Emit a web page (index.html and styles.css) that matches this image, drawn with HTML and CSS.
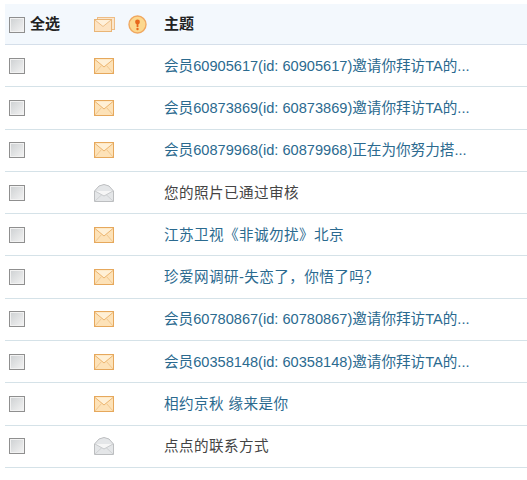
FILE: index.html
```html
<!DOCTYPE html>
<html lang="zh-CN">
<head>
  <meta charset="UTF-8" />
  <title>收件箱</title>
  <link rel="stylesheet" href="styles.css">
</head>
<body>

<svg class="defs" width="0" height="0">
  <symbol id="mailNew" viewBox="0 0 20 16">
    <rect x="0.5" y="0.5" width="19" height="15" fill="#fde2b8" stroke="#e6a85c"/>
    <path d="M1 1.5 L10 9 L19 1.5" fill="#fff0d6" stroke="#ecb46e" stroke-width="1"/>
    <path d="M1 15 L7.5 7.5 M19 15 L12.5 7.5" fill="none" stroke="#f1c78e" stroke-width="1"/>
  </symbol>
  <symbol id="mailRead" viewBox="0 0 20 18">
    <path d="M0.5 7 L5 2 Q10 -1 15 2 L19.5 7 V17.5 H0.5 Z" fill="#e4e6e8" stroke="#bcbec0"/>
    <path d="M1 7 L10 12 L19 7" fill="#f6f6f6" stroke="#c8cacc"/>
    <path d="M1 17 L8 10.5 M19 17 L12 10.5" fill="none" stroke="#cfd1d3"/>
  </symbol>
</svg>

<div class="mail-list">
  <div class="row head">
    <div class="col-check"><span class="check"></span><b>全选</b></div>
    <div class="col-icon">
      <svg class="mail stacked" width="21" height="15" viewBox="0 0 21 15">
        <rect x="3.5" y="0.5" width="17" height="12" fill="#fbe6cb" stroke="#eebd86"/>
        <rect x="0.5" y="2.5" width="17" height="12" fill="#fde3c2" stroke="#e9b576"/>
        <path d="M1 3 L9 9.5 L17 3" fill="#fff0da" stroke="#edbf88"/>
      </svg>
    </div>
    <div class="col-flag">
      <svg width="19" height="19" viewBox="0 0 19 19">
        <circle cx="9.5" cy="9.5" r="8.5" fill="#fcd88e" stroke="#f0a860" stroke-width="1.4"/>
        <circle cx="9.5" cy="7" r="2.4" fill="#e8681c"/>
        <path d="M8.6 8 H10.4 V12 H8.6 Z" fill="#e8681c"/>
        <circle cx="9.5" cy="14" r="1.2" fill="#e8681c"/>
      </svg>
    </div>
    <div class="col-subject"><b>主题</b></div>
  </div>

  <div class="row">
    <div class="col-check"><span class="check"></span></div>
    <div class="col-icon"><svg class="mail" width="20" height="16"><use href="#mailNew"/></svg></div>
    <div class="col-flag"></div>
    <div class="col-subject"><a>会员60905617(id: 60905617)邀请你拜访TA的...</a></div>
  </div>
  <div class="row">
    <div class="col-check"><span class="check"></span></div>
    <div class="col-icon"><svg class="mail" width="20" height="16"><use href="#mailNew"/></svg></div>
    <div class="col-flag"></div>
    <div class="col-subject"><a>会员60873869(id: 60873869)邀请你拜访TA的...</a></div>
  </div>
  <div class="row">
    <div class="col-check"><span class="check"></span></div>
    <div class="col-icon"><svg class="mail" width="20" height="16"><use href="#mailNew"/></svg></div>
    <div class="col-flag"></div>
    <div class="col-subject"><a>会员60879968(id: 60879968)正在为你努力搭...</a></div>
  </div>
  <div class="row">
    <div class="col-check"><span class="check"></span></div>
    <div class="col-icon"><svg class="mail" width="20" height="18"><use href="#mailRead"/></svg></div>
    <div class="col-flag"></div>
    <div class="col-subject"><a class="cn read">您的照片已通过审核</a></div>
  </div>
  <div class="row">
    <div class="col-check"><span class="check"></span></div>
    <div class="col-icon"><svg class="mail" width="20" height="16"><use href="#mailNew"/></svg></div>
    <div class="col-flag"></div>
    <div class="col-subject"><a class="cn">江苏卫视《非诚勿扰》北京</a></div>
  </div>
  <div class="row">
    <div class="col-check"><span class="check"></span></div>
    <div class="col-icon"><svg class="mail" width="20" height="16"><use href="#mailNew"/></svg></div>
    <div class="col-flag"></div>
    <div class="col-subject"><a class="cn">珍爱网调研-失恋了，你悟了吗？</a></div>
  </div>
  <div class="row">
    <div class="col-check"><span class="check"></span></div>
    <div class="col-icon"><svg class="mail" width="20" height="16"><use href="#mailNew"/></svg></div>
    <div class="col-flag"></div>
    <div class="col-subject"><a>会员60780867(id: 60780867)邀请你拜访TA的...</a></div>
  </div>
  <div class="row">
    <div class="col-check"><span class="check"></span></div>
    <div class="col-icon"><svg class="mail" width="20" height="16"><use href="#mailNew"/></svg></div>
    <div class="col-flag"></div>
    <div class="col-subject"><a>会员60358148(id: 60358148)邀请你拜访TA的...</a></div>
  </div>
  <div class="row">
    <div class="col-check"><span class="check"></span></div>
    <div class="col-icon"><svg class="mail" width="20" height="16"><use href="#mailNew"/></svg></div>
    <div class="col-flag"></div>
    <div class="col-subject"><a class="cn">相约京秋 缘来是你</a></div>
  </div>
  <div class="row">
    <div class="col-check"><span class="check"></span></div>
    <div class="col-icon"><svg class="mail" width="20" height="18"><use href="#mailRead"/></svg></div>
    <div class="col-flag"></div>
    <div class="col-subject"><a class="cn read">点点的联系方式</a></div>
  </div>
</div>

</body>
</html>
```

FILE: styles.css
```css
* {
  box-sizing: border-box;
}

body {
  margin: 0;
  padding: 4px 0 0 5px;
  background: #fff;
  font-family: "Liberation Sans", "Noto Sans CJK SC", sans-serif;
  font-size: 14.6px;
  color: #333;
}

.defs {
  position: absolute;
}

.row {
  display: flex;
  align-items: center;
  height: 42.3px;
  border-bottom: 1px solid #d5e2e8;
}

.head {
  height: 41px;
  background: #f3f8fd;
  border-bottom-color: #d5dfea;
}

.col-check {
  display: flex;
  align-items: center;
  gap: 5px;
  width: 88px;
  padding-left: 4px;
}

.col-icon {
  display: flex;
  width: 35px;
  padding-left: 1px;
}

.col-flag {
  display: flex;
  width: 36px;
}

.col-subject {
  flex: 1;
  padding-bottom: 3px;
  white-space: nowrap;
}

.check {
  width: 16px;
  height: 16px;
  border: 1px solid #8f8f8f;
  background: linear-gradient(135deg, #cdd0d2, #f4f4f4);
  box-shadow: inset 0 0 0 1px #f2f2f2;
}

.head .check {
  margin-top: 2px;
}

.head b {
  font-size: 15px;
}

.col-check b {
  padding-bottom: 3px;
}

b {
  color: #222;
  font-weight: bold;
}

a {
  color: #2b6a8f;
}

a.cn {
  letter-spacing: 0.4px;
}

a.read {
  color: #444;
}
```
